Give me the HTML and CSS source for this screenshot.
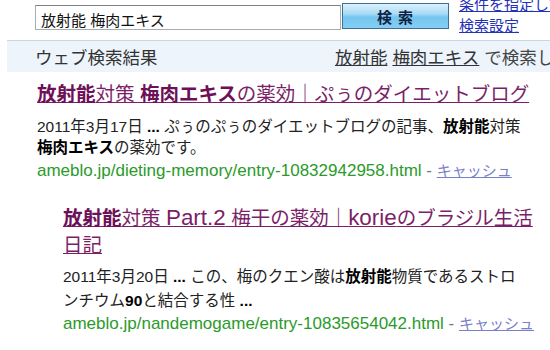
FILE: index.html
```html
<html lang="ja">

<head>
	<meta charset="UTF-8">
	<title>放射能 梅肉エキス - 検索</title>
	<link rel="stylesheet" href="styles.css">
</head>

<body>
	<div class="page">
		<form class="search-row">
			<div class="search-input">放射能 梅肉エキス</div>
			<button class="search-button" type="button">検 索</button>
			<div class="search-links">
				<a href="#">条件を指定して検索</a>
				<a href="#">検索設定</a>
			</div>
		</form>

		<div class="result-bar">
			<span class="bar-title">ウェブ検索結果</span>
			<span class="bar-query"><a href="#">放射能</a> <a href="#">梅肉エキス</a> で検索した結果</span>
		</div>

		<ol class="results">
			<li class="result">
				<a class="result-title" href="#"><b>放射能</b>対策 <b>梅肉エキス</b>の薬効｜ぷぅのダイエットブログ</a>
				<p class="snippet">2011年3月17日 <b>...</b> ぷぅのぷぅのダイエットブログの記事、<b>放射能</b>対策<br><b>梅肉エキス</b>の薬効です。</p>
				<div class="result-url">ameblo.jp/dieting-memory/entry-10832942958.html <span class="dash">-</span> <a href="#">キャッシュ</a></div>
			</li>
			<li class="result result-sub">
				<a class="result-title" href="#"><b>放射能</b>対策 <span class="en">Part.2</span> 梅干の薬効｜<span class="en">korie</span>のブラジル生活<br>日記</a>
				<p class="snippet">2011年3月20日 <b>...</b> この、梅のクエン酸は<b>放射能</b>物質であるストロ<br>ンチウム<b>90</b>と結合する性 <b>...</b></p>
				<div class="result-url">ameblo.jp/nandemogame/entry-10835654042.html <span class="dash">-</span> <a href="#">キャッシュ</a></div>
			</li>
		</ol>
	</div>
</body>

</html>
```

FILE: styles.css
```css
body {
	margin: 0;
	background: #fff;
	font-family: "Liberation Sans", Arial, "Noto Sans CJK JP", sans-serif;
	color: #222;
	overflow: hidden;
}

.page {
	width: 620px;
	white-space: nowrap;
}

/* search form */
.search-row {
	display: flex;
	align-items: flex-start;
	margin: 0;
	padding: 3px 0 0 35px;
	height: 37px;
}

.search-input {
	box-sizing: border-box;
	width: 306px;
	height: 25px;
	margin-top: 2px;
	padding: 3px 0 0 5px;
	border: 1px solid #a5acb2;
	border-top-color: #7b8188;
	font-size: 15px;
	color: #111;
}

.search-button {
	box-sizing: border-box;
	width: 107px;
	height: 26px;
	margin-left: 1px;
	padding: 0;
	border: 1px solid #3f6f96;
	background: linear-gradient(#dcf1fc 0%, #a9dcf6 40%, #72c6f0 55%, #86cff3 100%);
	font-family: "Liberation Sans", "Noto Sans CJK JP", sans-serif;
	font-size: 15px;
	font-weight: bold;
	color: #102040;
	letter-spacing: 1px;
}

.search-links {
	display: flex;
	flex-direction: column;
	margin: -9px 0 0 10px;
	font-size: 15px;
	line-height: 21px;
}

.search-links a {
	color: #2530b8;
}

/* blue bar */
.result-bar {
	display: grid;
	grid-template-columns: 300px 1fr;
	align-items: center;
	box-sizing: border-box;
	height: 32px;
	margin-left: 7px;
	padding: 0 0 0 28px;
	background: #eef4fb;
	border-top: 1px solid #c8d6e8;
	font-size: 17.5px;
	color: #333;
}

.bar-query {
	color: #444;
}

.bar-query a {
	color: #333;
}

/* results */
.results {
	list-style: none;
	margin: 0;
	padding: 9px 0 0 37px;
	width: 510px;
}

.result {
	margin-bottom: 23px;
}

.result-title {
	display: block;
	font-size: 19.5px;
	line-height: 27px;
	color: #7c1f68;
}

.result-title b {
	color: #6e1058;
}

.result-title .en {
	font-size: 1.15em;
}

.snippet {
	margin: 8px 0 0;
	font-size: 15.5px;
	line-height: 21px;
	color: #222;
}

.snippet b {
	color: #000;
}

.result-url {
	margin-top: 3px;
	font-size: 17px;
	line-height: 20px;
	color: #2a9a2a;
}

.result-url .dash {
	color: #777;
}

.result-url a {
	color: #7b7fc8;
	font-size: 15px;
}

.result-sub {
	margin-left: 26px;
}

.result-sub .snippet {
	margin-top: 6px;
	line-height: 24px;
}

.result-sub .result-url {
	margin-top: 1px;
}
```
